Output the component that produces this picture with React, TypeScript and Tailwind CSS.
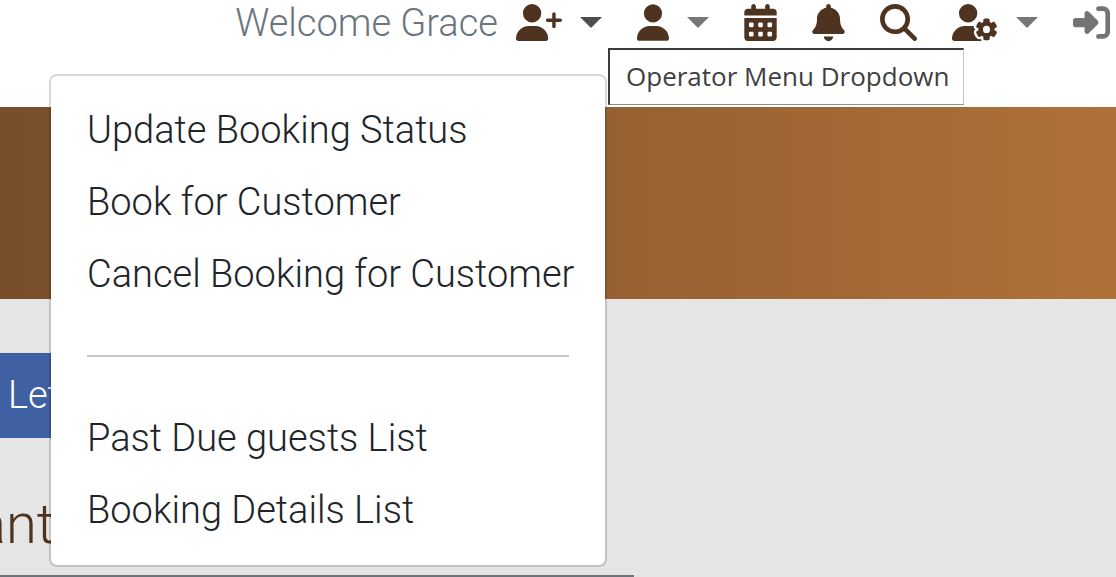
import type { ReactNode } from "react";
import {
  FaBell,
  FaCalendarDays,
  FaMagnifyingGlass,
  FaRightToBracket,
  FaUser,
  FaUserGear,
  FaUserPlus,
} from "react-icons/fa6";

const bookingActions = [
  "Update Booking Status",
  "Book for Customer",
  "Cancel Booking for Customer",
];
const bookingLists = ["Past Due guests List", "Booking Details List"];

function Caret({ className }: { className: string }) {
  return (
    <svg viewBox="0 0 22 11" className={`h-[11px] w-[22px] ${className}`} aria-hidden="true">
      <path d="M0 0H22L12 10Q11 11 10 10Z" fill="currentColor" />
    </svg>
  );
}

function NavButton({ label, children }: { label: string; children: ReactNode }) {
  return (
    <button type="button" aria-label={label} className="flex items-center gap-[18px] text-[#4e3420]">
      {children}
    </button>
  );
}

function MenuItem({ label }: { label: string }) {
  return (
    <a href="#" className="block px-9 text-[38px] leading-[72px] whitespace-nowrap text-[#212529]">
      {label}
    </a>
  );
}

function OperatorMenu() {
  return (
    <nav
      aria-label="Operator menu"
      className="absolute top-[70px] -right-[5px] z-10 w-[558px] rounded-lg border-2 border-black/15 bg-white bg-clip-padding pt-[18px] pb-[19px]"
    >
      {bookingActions.map((label) => (
        <MenuItem key={label} label={label} />
      ))}
      <hr className="mx-9 my-[45px] border-t-2 border-[#c8c8c8]" />
      {bookingLists.map((label) => (
        <MenuItem key={label} label={label} />
      ))}
    </nav>
  );
}

export default function App() {
  return (
    <div className="min-h-screen overflow-hidden bg-[#e5e5e5] font-['Roboto',sans-serif] font-light">
      <header className="flex h-[107px] items-start justify-end gap-[35px] bg-white pt-1 pr-1.5">
        <div className="relative flex h-[37px] items-center gap-[18px]">
          <span className="text-[38px] leading-[38px] whitespace-nowrap text-[#6c757d]">Welcome Grace</span>
          <NavButton label="Operator menu">
            <FaUserPlus className="h-[37px] w-[46px]" />
            <Caret className="text-[#4d4d4d]" />
          </NavButton>
          <OperatorMenu />
        </div>
        <div className="relative">
          <NavButton label="Account">
            <FaUser className="h-[37px] w-8" />
            <Caret className="text-[#777777]" />
          </NavButton>
          <div
            role="tooltip"
            className="absolute top-11 -left-[29px] z-20 w-[356px] border-t-2 border-r border-b border-l-2 border-t-[#3c3c3c] border-r-[#c4c4c4] border-b-[#8c8f92] border-l-[#3c3c3c] bg-white px-4 pb-0.5 font-['Open_Sans',sans-serif] text-[26px] leading-[52px] font-normal whitespace-nowrap text-[#3f3f3f]"
          >
            Operator Menu Dropdown
          </div>
        </div>
        <NavButton label="Calendar">
          <FaCalendarDays className="h-[37px] w-[33px]" />
        </NavButton>
        <NavButton label="Notifications">
          <FaBell className="h-[37px] w-[33px]" />
        </NavButton>
        <NavButton label="Search">
          <FaMagnifyingGlass className="h-[37px] w-[37px]" />
        </NavButton>
        <NavButton label="User settings">
          <FaUserGear className="h-[37px] w-[46px]" />
          <Caret className="text-[#777777]" />
        </NavButton>
        <a href="#" aria-label="Sign in" className="text-[#747474]">
          <FaRightToBracket className="h-[37px] w-[37px]" />
        </a>
      </header>

      <div className="h-48 bg-linear-to-r from-[#784e2b] to-[#b07138]" />

      <main className="pt-[54px]">
        <button type="button" className="block h-[85px] bg-[#3f60a2] pr-4 pl-2 text-[38px] text-white">
          Let
        </button>
        <h1 className="-ml-6 pt-[50px] text-[56px] leading-[72px] text-[#4e3420]">ant</h1>
        <hr className="mt-[15px] w-[634px] border-t-2 border-[#6c757d]" />
      </main>
    </div>
  );
}
